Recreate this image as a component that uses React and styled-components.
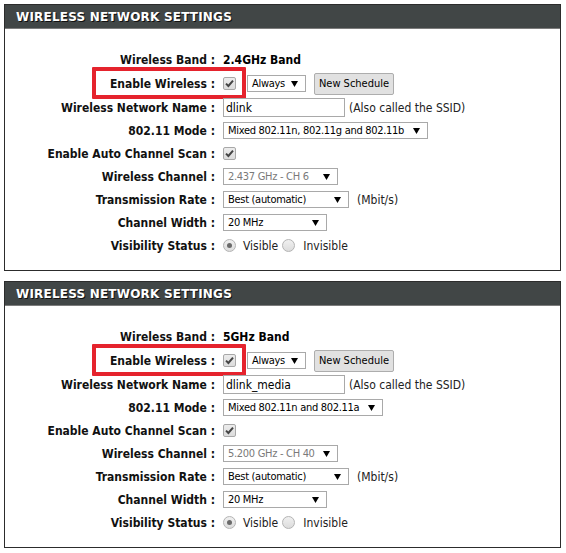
import React from 'react';
import styled, { createGlobalStyle } from 'styled-components';

const GlobalStyle = createGlobalStyle`
  body {
    margin: 0;
    background: #fff;
    font-family: "DejaVu Sans Condensed", "DejaVu Sans", sans-serif;
    color: #000;
  }
`;

const bands = [
  {
    band: '2.4GHz Band',
    ssid: 'dlink',
    mode: 'Mixed 802.11n, 802.11g and 802.11b',
    modeWidth: 205,
    channel: '2.437 GHz - CH 6',
  },
  {
    band: '5GHz Band',
    ssid: 'dlink_media',
    mode: 'Mixed 802.11n and 802.11a',
    modeWidth: 160,
    channel: '5.200 GHz - CH 40',
  },
];

export default function App() {
  return (
    <>
      <GlobalStyle />
      <Page>
        {bands.map((b) => (
          <Panel key={b.band}>
            <Header>WIRELESS NETWORK SETTINGS</Header>
            <Body>
              <Row>
                <Label>Wireless Band :</Label>
                <Value><Strong>{b.band}</Strong></Value>
              </Row>
              <Row $tall>
                <Highlight />
                <Label>Enable Wireless :</Label>
                <Value>
                  <Checkbox />
                  <Select $width={59} $ml={11}>Always</Select>
                  <Button $ml={8}>New Schedule</Button>
                </Value>
              </Row>
              <Row>
                <Label>Wireless Network Name :</Label>
                <Value>
                  <TextInput readOnly value={b.ssid} />
                  <Hint $ml={4}>(Also called the SSID)</Hint>
                </Value>
              </Row>
              <Row>
                <Label>802.11 Mode :</Label>
                <Value><Select $width={b.modeWidth}>{b.mode}</Select></Value>
              </Row>
              <Row>
                <Label>Enable Auto Channel Scan :</Label>
                <Value><Checkbox /></Value>
              </Row>
              <Row>
                <Label>Wireless Channel :</Label>
                <Value><Select $width={115} $disabled>{b.channel}</Select></Value>
              </Row>
              <Row>
                <Label>Transmission Rate :</Label>
                <Value>
                  <Select $width={126}>Best (automatic)</Select>
                  <Hint $ml={8}>(Mbit/s)</Hint>
                </Value>
              </Row>
              <Row>
                <Label>Channel Width :</Label>
                <Value><Select $width={104}>20 MHz</Select></Value>
              </Row>
              <Row>
                <Label>Visibility Status :</Label>
                <Value>
                  <Radio $checked />
                  <Hint $ml={7}>Visible</Hint>
                  <Radio $ml={4} />
                  <Hint $ml={8}>Invisible</Hint>
                </Value>
              </Row>
            </Body>
          </Panel>
        ))}
      </Page>
    </>
  );
}

function Checkbox() {
  return (
    <CheckBox>
      <svg width="9" height="9" viewBox="0 0 9 9">
        <path d="M1 4.6 L3.4 7 L8 1.6" fill="none" stroke="#444" strokeWidth="2" />
      </svg>
    </CheckBox>
  );
}

function Select({ children, ...rest }) {
  return (
    <SelectBox {...rest}>
      <span>{children}</span>
      <svg width="7" height="6" viewBox="0 0 7 6">
        <polygon points="0,0 7,0 3.5,6" fill="#000" />
      </svg>
    </SelectBox>
  );
}

const Page = styled.div`
  display: flex;
  flex-direction: column;
  gap: 10px;
  padding: 4px 0 0 4px;
  width: 557px;
`;

const Panel = styled.section`
  border: 1px solid #2c2c2c;
  background: #fff;
`;

const Header = styled.h2`
  margin: 0;
  height: 23px;
  line-height: 24px;
  padding-left: 11px;
  background: #414646;
  border-bottom: 1px solid #7c7c7c;
  color: #fff;
  font-family: "DejaVu Sans", sans-serif;
  font-size: 12px;
  font-weight: bold;
  letter-spacing: 0.2px;
  text-shadow: 1px 1px 0 #111;
`;

const Body = styled.div`
  padding: 19px 0 13px;
`;

const Row = styled.div`
  position: relative;
  display: grid;
  grid-template-columns: 210px 1fr;
  column-gap: 8px;
  align-items: center;
  min-height: ${(p) => (p.$tall ? 25 : 23)}px;
`;

const Highlight = styled.div`
  position: absolute;
  left: 87px;
  top: -4px;
  width: 154px;
  height: 32px;
  box-sizing: border-box;
  border: 4px solid #e5232d;
  border-radius: 1px;
  pointer-events: none;
`;

const Label = styled.div`
  text-align: right;
  white-space: nowrap;
  font-size: 12px;
  font-weight: bold;
  color: #111;
`;

const Value = styled.div`
  display: flex;
  align-items: center;
  white-space: nowrap;
`;

const Strong = styled.span`
  font-size: 12px;
  font-weight: bold;
`;

const Hint = styled.span`
  margin-left: ${(p) => p.$ml || 0}px;
  font-size: 12px;
  color: #222;
`;

const CheckBox = styled.span`
  display: inline-flex;
  align-items: center;
  justify-content: center;
  box-sizing: border-box;
  width: 13px;
  height: 13px;
  border: 1px solid #a8a8a8;
  border-radius: 2px;
  background: linear-gradient(#ececec, #dcdcdc);
`;

const Radio = styled.span`
  display: inline-flex;
  align-items: center;
  justify-content: center;
  box-sizing: border-box;
  width: 13px;
  height: 13px;
  margin-left: ${(p) => p.$ml || 0}px;
  border: 1px solid #b4b4b4;
  border-radius: 50%;
  background: linear-gradient(#f0f0f0, #dcdcdc);

  &::after {
    content: '';
    display: ${(p) => (p.$checked ? 'block' : 'none')};
    width: 5px;
    height: 5px;
    border-radius: 50%;
    background: #6a6a6a;
  }
`;

const SelectBox = styled.span`
  display: inline-flex;
  align-items: center;
  justify-content: space-between;
  box-sizing: border-box;
  width: ${(p) => p.$width}px;
  height: 17px;
  margin-left: ${(p) => p.$ml || 0}px;
  padding: 0 7px 0 4px;
  border: 1px solid #a9a9a9;
  background: #fff;
  font-size: 11px;
  letter-spacing: -0.3px;
  color: ${(p) => (p.$disabled ? '#7a7a7a' : '#000')};
`;

const Button = styled.span`
  display: inline-flex;
  align-items: center;
  justify-content: center;
  box-sizing: border-box;
  width: 80px;
  height: 22px;
  margin-left: ${(p) => p.$ml || 0}px;
  border: 1px solid #adadad;
  border-radius: 2px;
  background: #e1e1e1;
  font-size: 11px;
  color: #000;
`;

const TextInput = styled.input`
  box-sizing: border-box;
  width: 122px;
  height: 19px;
  margin: 0;
  padding: 0 2px;
  border: 1px solid #a9a9a9;
  font-family: inherit;
  font-size: 12px;
  color: #000;
  outline: none;
`;
